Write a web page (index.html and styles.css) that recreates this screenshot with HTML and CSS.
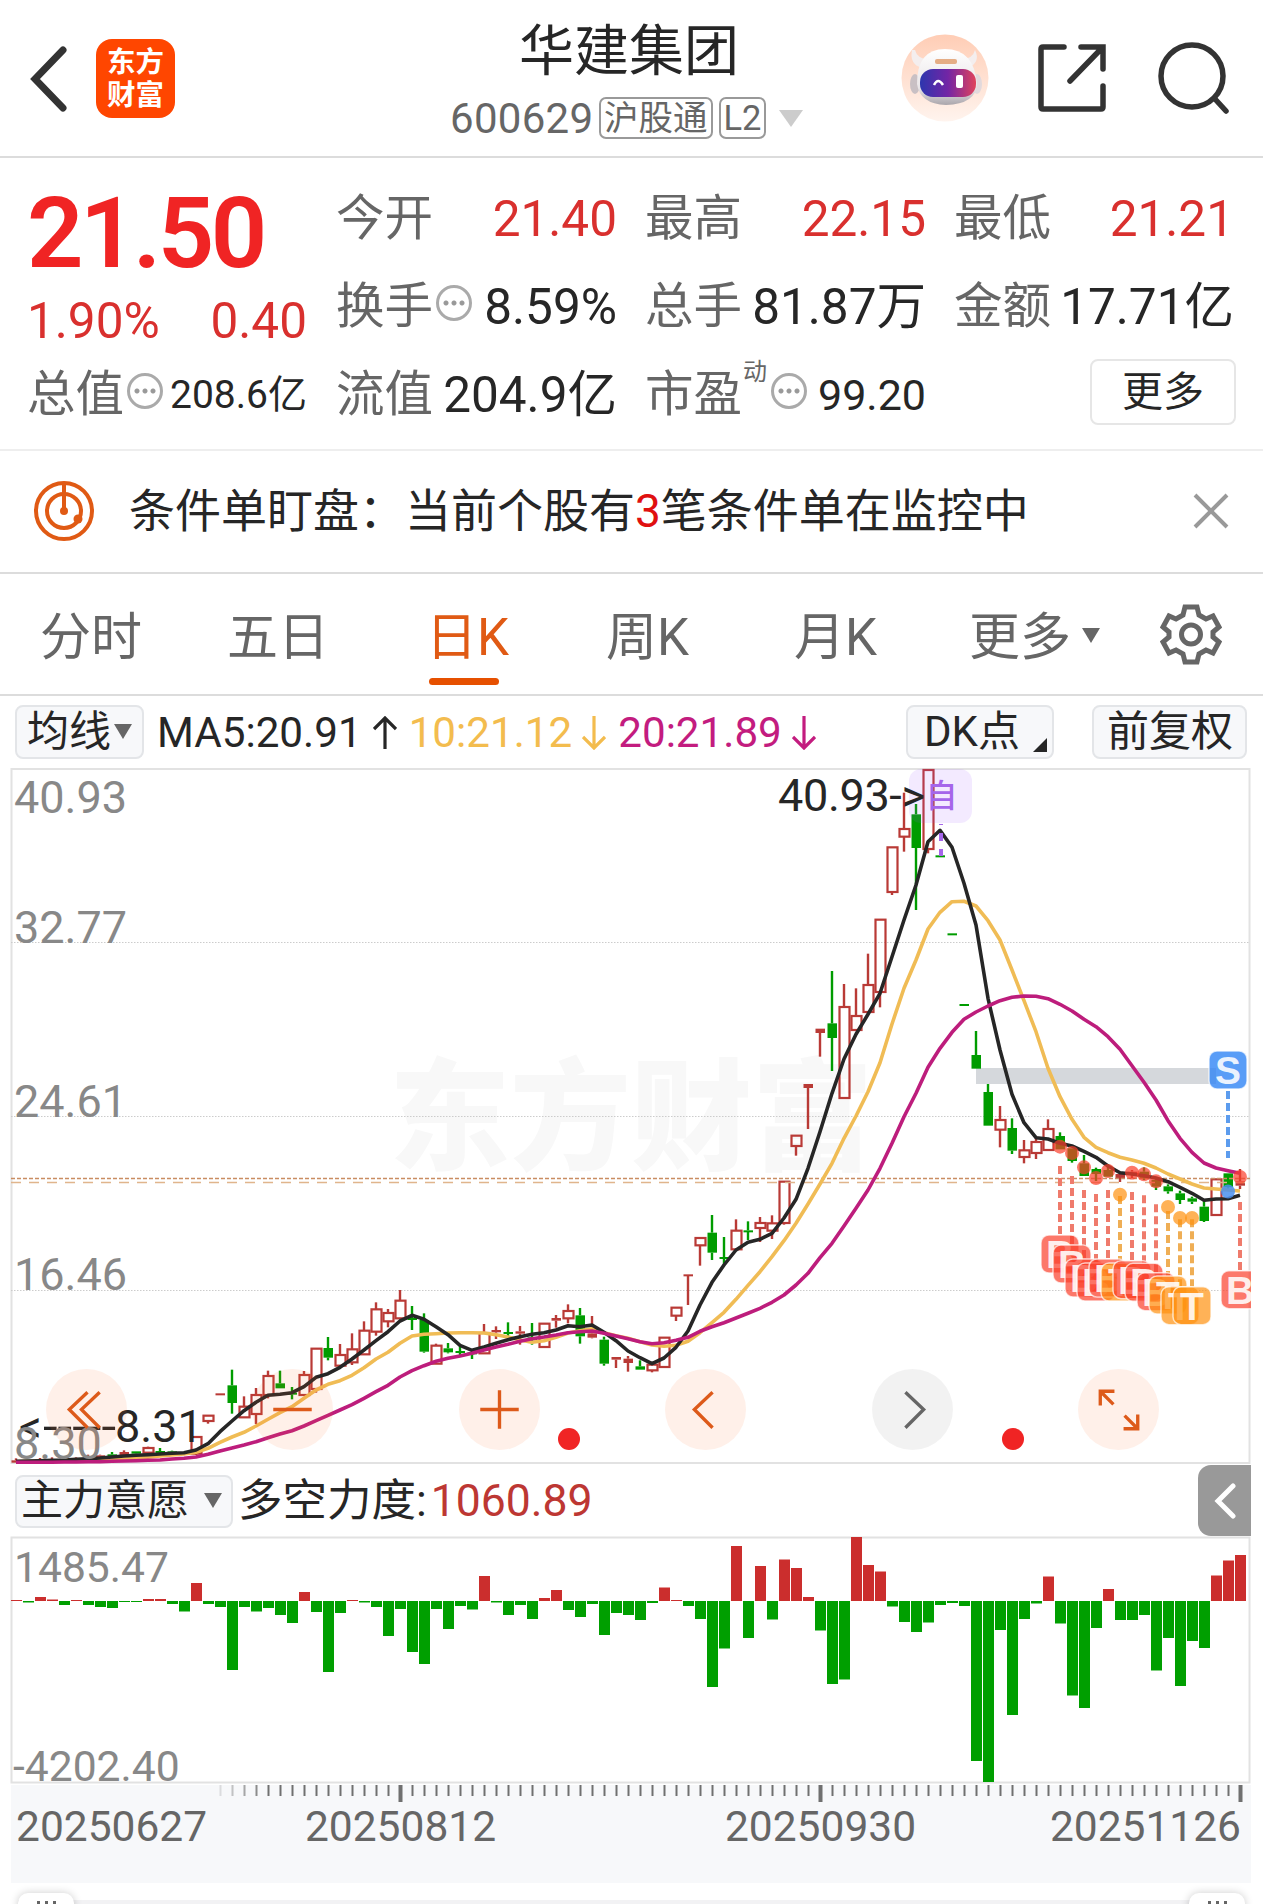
FILE: index.html
```html
<!DOCTYPE html>
<html lang="zh-CN">
<head>
  <meta charset="UTF-8" />
  <meta name="viewport" content="width=device-width, initial-scale=1.0"/>
  <title>华建集团 600629</title>
  <link rel="stylesheet" href="styles.css">
</head>
<body>
  <header class="header">
    <div class="header-left">
      <svg class="back" width="40" height="66" viewBox="0 0 40 66"><path d="M34 4 L6 33 L34 62"/></svg>
      <div class="logo"><span>东方</span><span>财富</span></div>
    </div>
    <div class="header-title">
      <h1>华建集团</h1>
      <div class="code">
        <span class="num">600629</span><span class="tag">沪股通</span><span class="tag">L2</span>
        <svg width="26" height="18" viewBox="0 0 26 18"><path d="M1 1h24L13 18z" fill="#ccc"/></svg>
      </div>
    </div>
    <div class="header-right">
      <svg width="88" height="88" viewBox="0 0 88 88">
        <defs>
          <linearGradient id="halo" x1="0" y1="0" x2="0" y2="1"><stop offset="0" stop-color="#ffcdb5"/><stop offset="1" stop-color="#fff4ee"/></linearGradient>
          <linearGradient id="visor"><stop offset="0" stop-color="#2d36ae"/><stop offset=".5" stop-color="#7325a5"/><stop offset="1" stop-color="#e0435c"/></linearGradient>
          <linearGradient id="shell" x1="0" y1="0" x2="0" y2="1"><stop offset="0" stop-color="#fff"/><stop offset=".7" stop-color="#e9e5e7"/><stop offset="1" stop-color="#aaa6ac"/></linearGradient>
        </defs>
        <circle cx="44" cy="44" r="43.5" fill="url(#halo)"/>
        <ellipse cx="14" cy="50" rx="5" ry="10" fill="#c9c0c4"/>
        <ellipse cx="76" cy="50" rx="5" ry="10" fill="#e2d9dc"/>
        <path d="M11 16q-3 14 10 18l8-8q-13-1-15-10zM74 16q6 12-7 18l-8-8q13-1 15-10z" fill="#f4eeee"/>
        <path d="M16 50Q16 15 44 15Q73 15 76 50Q75 70 45 71Q19 70 16 50z" fill="url(#shell)"/>
        <rect x="34" y="25" width="22" height="5" rx="2" fill="#e5ad85"/>
        <rect x="19" y="35" width="56" height="28" rx="13" fill="url(#visor)"/>
        <path d="M33 51q4-8 9 0" fill="none" stroke="#fff" stroke-width="2.5"/>
        <rect x="55" y="41" width="7" height="13" rx="2" fill="#fff"/>
      </svg>
      <svg class="line-icon" width="70" height="70" viewBox="0 0 70 70"><path d="M27 4H6Q4 4 4 6V64Q4 66 6 66H64Q66 66 66 64V43M44 4H66V26M65 5L33 38"/></svg>
      <svg class="line-icon search" width="74" height="74" viewBox="0 0 74 74"><circle cx="35" cy="35" r="31"/><path d="M58 58L69 70"/></svg>
    </div>
  </header>

  <section class="quote">
    <div class="price-col">
      <div class="price">21.50</div>
      <div class="change"><span>1.90%</span><span>0.40</span></div>
      <div class="cell"><label>总值</label><i class="info"></i><b class="small">208.6亿</b></div>
    </div>
    <div class="cells">
      <div class="cell"><label>今开</label><b class="up">21.40</b></div>
      <div class="cell"><label>最高</label><b class="up">22.15</b></div>
      <div class="cell"><label>最低</label><b class="up">21.21</b></div>
      <div class="cell"><label>换手</label><i class="info"></i><b>8.59%</b></div>
      <div class="cell"><label>总手</label><b>81.87万</b></div>
      <div class="cell"><label>金额</label><b>17.71亿</b></div>
      <div class="cell"><label>流值</label><b>204.9亿</b></div>
      <div class="cell"><label>市盈</label><sup>动</sup><i class="info"></i><b class="mid">99.20</b></div>
      <div class="cell more-cell"><button class="more">更多</button></div>
    </div>
  </section>

  <section class="notice">
    <svg width="62" height="62" viewBox="0 0 62 62" fill="none" stroke="#e05a14" stroke-width="4">
      <circle cx="31" cy="31" r="28"/><circle cx="31" cy="31" r="17"/><path d="M31 3V31"/>
      <circle cx="31" cy="31" r="4" fill="#e05a14" stroke="none"/><circle cx="45" cy="39" r="4.5" fill="#e05a14" stroke="none"/>
    </svg>
    <p>条件单盯盘：当前个股有<em>3</em>笔条件单在监控中</p>
    <svg width="36" height="36" viewBox="0 0 36 36"><path d="M2 2L34 34M34 2L2 34" stroke="#999" stroke-width="4"/></svg>
  </section>

  <nav class="tabs">
    <a class="tab">分时</a>
    <a class="tab">五日</a>
    <a class="tab active">日K</a>
    <a class="tab">周K</a>
    <a class="tab">月K</a>
    <a class="tab">更多<i class="caret"></i></a>
    <svg width="62" height="62" viewBox="0 0 62 62" fill="none" stroke="#666" stroke-width="5">
      <path d="M25 4H37L39 12L46 16L53 13L59 24L53 29V34L59 39L53 50L46 47L39 51L37 59H25L23 51L16 47L9 50L3 39L9 34V29L3 24L9 13L16 16L23 12Z"/>
      <circle cx="31" cy="31.500" r="9.500"/>
    </svg>
  </nav>

  <div class="indicators">
    <button class="chip chip-ma">均线<i class="caret"></i></button>
    <span class="ma ma5">MA5:20.91<svg width="24" height="34" viewBox="0 0 24 34"><path d="M12 33V2M1 13L12 2L23 13"/></svg></span>
    <span class="ma ma10">10:21.12<svg width="24" height="34" viewBox="0 0 24 34"><path d="M12 0V31M1 21L12 32L23 21"/></svg></span>
    <span class="ma ma20">20:21.89<svg width="24" height="34" viewBox="0 0 24 34"><path d="M12 0V31M1 21L12 32L23 21"/></svg></span>
    <button class="chip chip-dk">DK点<i class="corner"></i></button>
    <button class="chip chip-fq">前复权</button>
  </div>

  <div class="kline">
    <svg id="kline" width="1263" height="698" viewBox="0 768 1263 698"></svg>
    <div class="controls">
      <button><svg viewBox="0 0 80 80"><path d="M41 23L23 40L41 58M53 23L35 40L53 58"/></svg></button>
      <button><svg viewBox="0 0 80 80"><path d="M21 40H59"/></svg></button>
      <button><svg viewBox="0 0 80 80"><path d="M21 40H59M40 21V59"/></svg></button>
      <button><svg viewBox="0 0 80 80"><path d="M47 23L29 40L47 58"/></svg></button>
      <button class="off"><svg viewBox="0 0 80 80"><path d="M33 23L51 40L33 58"/></svg></button>
      <button><svg viewBox="0 0 80 80"><path d="M22 36V22H36M22 22L35 35M45 59H59V45M59 59L46 46"/></svg></button>
    </div>
  </div>

  <div class="sub-head">
    <button class="chip chip-sub">主力意愿<i class="caret"></i></button>
    <span class="sub-name">多空力度:<em>1060.89</em></span>
    <button class="expand"><svg width="24" height="36" viewBox="0 0 24 36"><path d="M20 3L5 18L20 33"/></svg></button>
  </div>

  <svg class="force" id="force" width="1263" height="249" viewBox="0 1536 1263 249"></svg>
  <svg class="axis" id="axis" width="1263" height="98" viewBox="0 1785 1263 98"></svg>

  <div class="slider">
    <div class="handle"><i></i><i></i><i></i></div>
    <div class="handle"><i></i><i></i><i></i></div>
  </div>

  <script src="chart.js"></script>
</body>
</html>
```
FILE: styles.css
```css
* {
  box-sizing: border-box;
}
body {
  margin: 0;
  width: 1263px;
  height: 1904px;
  overflow: hidden;
  background: #fff;
  color: #262626;
  font-family: Roboto, "Noto Sans CJK SC", sans-serif;
}
button {
  font-family: inherit;
  color: inherit;
  padding: 0;
}
svg {
  display: block;
  flex: none;
}
em, i, b {
  font-style: normal;
  font-weight: 400;
}

/* header */
.header {
  display: flex;
  justify-content: space-between;
  height: 158px;
  border-bottom: 2px solid #dcdcdc;
}
.header-left {
  width: 420px;
  padding: 39px 0 0 29px;
  display: flex;
  align-items: flex-start;
}
.back {
  margin: 7px 27px 0 0;
  fill: none;
  stroke: #333;
  stroke-width: 7;
  stroke-linecap: round;
}
.logo {
  width: 79px;
  height: 79px;
  padding-top: 7px;
  border-radius: 16px;
  background: #ff4600;
  color: #fff;
  font-size: 28.5px;
  font-weight: 700;
  line-height: 33px;
  text-align: center;
}
.logo span {
  display: block;
}
.header-title {
  width: 380px;
}
.header-title h1 {
  margin: 16px 0 0 99px;
  font-size: 55px;
  font-weight: 400;
  line-height: 70px;
  white-space: nowrap;
}
.code {
  display: flex;
  align-items: center;
  height: 64px;
  padding-left: 30px;
  gap: 6px;
  color: #666;
  font-size: 42px;
  white-space: nowrap;
}
.code svg {
  margin-left: 6px;
}
.code .num {
  width: 143px;
  letter-spacing: .3px;
}
.tag {
  height: 42px;
  padding: 0 3px;
  border: 2px solid #999;
  border-radius: 7px;
  font-size: 34.5px;
  line-height: 38px;
}
.header-right {
  width: 463px;
  display: flex;
  align-items: center;
  padding-left: 101px;
  gap: 48px;
}
.line-icon {
  fill: none;
  stroke: #333;
  stroke-width: 5.5;
  stroke-linecap: round;
}
.search {
  margin-left: 2px;
}

/* quote */
.quote {
  display: flex;
  height: 293px;
  padding: 17px 27px 0 28px;
  border-bottom: 2px solid #eee;
}
.price-col {
  width: 279px;
  padding-top: 9px;
  margin-right: 30px;
}
.price {
  height: 100px;
  margin-left: -1px;
  color: #f02424;
  font-size: 99px;
  font-weight: 600;
  line-height: 99px;
  letter-spacing: -3.5px;
}
.change {
  display: flex;
  justify-content: space-between;
  margin-left: -1px;
  color: #d9302e;
  font-size: 49.5px;
  line-height: 74px;
}
.price-col .cell {
  height: 74px;
}
.cells {
  display: grid;
  grid-template-columns: 280px 280px 279px;
  grid-template-rows: 88px 88px 88px;
  column-gap: 29px;
}
.cell {
  display: flex;
  align-items: center;
  font-size: 48px;
  white-space: nowrap;
}
.cell label {
  margin-left: -1px;
  color: #666;
  font-size: 48.5px;
  line-height: 76px;
}
.cell b {
  margin-left: auto;
  font-size: 49.5px;
  line-height: 76px;
}
.cell b.small {
  font-size: 39px;
}
.cell b.mid {
  font-size: 43px;
}
.cell b.up {
  color: #d9302e;
}
.cell sup {
  align-self: flex-start;
  margin: 7px 2px 0 1px;
  color: #666;
  font-size: 24px;
  line-height: 28px;
}
/* round "..." hint */
.info {
  width: 36px;
  height: 36px;
  margin: -8px 0 0 3px;
  border: 3px solid #aaa;
  border-radius: 50%;
  background: radial-gradient(circle, #999 2px, transparent 3px) center / 8px 8px no-repeat,
    radial-gradient(circle, #999 2px, transparent 3px) 3px center / 8px 8px no-repeat,
    radial-gradient(circle, #999 2px, transparent 3px) 19px center / 8px 8px no-repeat;
}
sup + .info {
  margin-left: 2px;
}
.more {
  width: 146px;
  height: 66px;
  margin: -6px -2px 0 auto;
  border: 2px solid #e6e6e6;
  border-radius: 8px;
  background: #fff;
  font-size: 41px;
  line-height: 60px;
}

/* notice */
.notice {
  display: flex;
  align-items: center;
  height: 123px;
  padding: 0 34px 2px 33px;
  border-bottom: 2px solid #dcdcdc;
}
.notice p {
  margin: 0 auto 0 34px;
  font-size: 46px;
  line-height: 80px;
}
.notice em {
  color: #e01010;
}

/* tabs */
.tabs {
  display: flex;
  align-items: center;
  height: 122px;
  padding: 0 41px 0 40px;
  border-bottom: 2px solid #dcdcdc;
}
.tab {
  height: 120px;
  margin-right: 85px;
  color: #666;
  font-size: 51px;
  line-height: 127px;
}
.tab.active {
  color: #e05a14;
}
.tab.active::after {
  content: "";
  display: block;
  width: 70px;
  height: 7px;
  margin: -23px 0 0 3px;
  border-radius: 4px;
  background: #e65000;
}
.tab:nth-child(2) { margin-right: 97px; }
.tab:nth-child(3) { margin-right: 97px; }
.tab:nth-child(4) { margin-right: 105px; }
.tab:nth-child(5) { margin-right: 92px; }
.tab:nth-child(6) { margin-right: auto; }
.caret {
  display: inline-block;
  width: 0;
  border: 9px solid transparent;
  border-top: 15px solid #666;
  border-bottom: 0;
  vertical-align: 7px;
}
.tab .caret {
  margin-left: 11px;
  vertical-align: 12px;
}

/* moving averages row */
.indicators {
  display: flex;
  align-items: center;
  height: 72px;
  padding: 0 16px 0 15px;
  white-space: nowrap;
}
.chip {
  height: 54px;
  border: 2px solid #e3e5e8;
  border-radius: 8px;
  background: #f7f8fa;
  font-size: 42px;
  line-height: 50px;
  text-align: left;
  white-space: nowrap;
}
.chip-ma {
  width: 129px;
  padding-left: 10px;
  margin-right: 13px;
}
.chip-ma .caret {
  margin-left: 3px;
}
.chip-dk {
  display: flex;
  width: 148px;
  padding-left: 16px;
  margin: 0 38px 0 auto;
}
.chip-fq {
  width: 155px;
  padding-left: 13px;
}
.corner {
  align-self: flex-end;
  margin: 0 5px 5px auto;
  border-left: 14px solid transparent;
  border-bottom: 14px solid #262626;
}
.ma {
  display: flex;
  align-items: center;
  padding-top: 1px;
  font-size: 42.2px;
  line-height: 60px;
}
.ma svg {
  margin: 0 12px 0 10px;
  fill: none;
  stroke: currentColor;
  stroke-width: 3.2;
}
.ma5 svg { margin-left: 11px; }
.ma10 { color: #f3bc4e; }
.ma20 { color: #c31c7f; }

/* charts */
.kline {
  position: relative;
  height: 698px;
}
.controls {
  position: absolute;
  left: 46px;
  bottom: 16px;
  display: flex;
  gap: 125.4px;
}
.controls button {
  width: 81px;
  height: 81px;
  border: 0;
  border-radius: 50%;
  background: rgba(255, 105, 35, .1);
}
.controls svg {
  fill: none;
  stroke: #dd5a1a;
  stroke-width: 3.3;
}
.controls .off {
  background: rgba(0, 0, 0, .05);
}
.controls .off svg {
  stroke: #666;
}
.label {
  fill: #888;
  font-size: 45px;
}
.label-sub {
  fill: #888;
  font-size: 42.6px;
}
.note {
  fill: #262626;
  font-size: 45px;
}
.watermark {
  fill: #f8f8f8;
  font-size: 121px;
  font-weight: 900;
}
.date {
  fill: #666;
  font-size: 42.5px;
}
.badge-text {
  fill: #fff;
  font-family: "Liberation Sans", sans-serif;
  font-size: 39px;
  font-weight: 700;
  text-anchor: middle;
}
.self-text {
  fill: #a566ea;
  font-size: 32px;
  font-weight: 500;
  text-anchor: middle;
}

/* sub chart head */
.sub-head {
  display: flex;
  align-items: center;
  height: 70px;
}
.chip-sub {
  width: 218px;
  height: 53px;
  padding-left: 4px;
  margin: 0 5px 0 15px;
  font-size: 42px;
  line-height: 48px;
}
.chip-sub .caret {
  margin-left: 15px;
}
.sub-name {
  font-size: 44.5px;
  line-height: 60px;
}
.sub-name em {
  margin-left: 4px;
  color: #bd3733;
}
.expand {
  width: 53px;
  height: 71px;
  margin: -1px 12px 0 auto;
  padding-left: 15px;
  border: 0;
  border-radius: 13px 0 0 13px;
  background: #999;
}
.expand svg {
  fill: none;
  stroke: #fff;
  stroke-width: 5;
  stroke-linecap: round;
}

/* range slider */
.slider {
  display: flex;
  justify-content: space-between;
  height: 21px;
  padding: 10px 18px 0;
  background: linear-gradient(#f2f2f4, #f2f2f4) 18px 17px / 1226px 4px no-repeat;
}
.handle {
  display: flex;
  justify-content: center;
  gap: 5px;
  width: 56px;
  height: 40px;
  padding-top: 8px;
  border-radius: 10px;
  background: #fff;
  box-shadow: 0 0 8px rgba(0, 0, 0, .2);
}
.handle i {
  width: 3px;
  height: 12px;
  background: #666;
}
```
FILE: chart.js
```js
var RED = '#b93a36', GREEN = '#009c00';
var STEP = 12, X0 = 16;

function x(i) { return X0 + STEP * i; }
function rect(x, y, w, h, attrs) {
  return '<rect x="' + x + '" y="' + y + '" width="' + w + '" height="' + h + '" ' + (attrs || '') + '/>';
}
function line(x1, y1, x2, y2, attrs) {
  return '<line x1="' + x1 + '" y1="' + y1 + '" x2="' + x2 + '" y2="' + y2 + '" ' + attrs + '/>';
}
function text(x, y, cls, s, attrs) {
  return '<text x="' + x + '" y="' + y + '" class="' + cls + '" ' + (attrs || '') + '>' + s + '</text>';
}

// blocks: [first index, y origin, rows]; rows are in thirds of a pixel
// row: [colour, body top, body bottom, high, low]
var candles = [
  [0, 1240, [
    ['r',661,668,655,668],['r',661,666,660,666],['r',658,664,654,664],['r',657,663,652,663],['r',655,660,650,660],
    ['r',654,658,652,658],['r',648,654,644,656],['r',646,650,644,652],['g',643,648,636,650],['r',636,648,631,650],
    ['g',634,641,634,645],['r',624,638,620,642],['g',633,637,624,640],['g',634,640,632,641],['g',636,642,636,642],
    ['r',591,641,591,645],['r',527,543,527,551],['r',460,464,460,464],['g',436,489,389,521],['r',500,532,469,532],
    ['r',465,522,444,552],['r',408,465,392,475],['g',430,445,392,445],['g',458,464,441,478],['r',405,465,393,465],
    ['r',326,447,326,458],['g',324,353,291,361],['r',345,377,312,377],['r',328,367,280,375],['r',272,343,244,343],
    ['r',208,275,187,287],['r',219,244,207,262],['r',182,235,150,235],['g',234,240,198,270],['g',240,335,220,338],
    ['r',317,371,311,371],['g',325,337,309,340],['g',333,338,320,346],['g',337,342,333,357],['r',279,340,252,340],
    ['r',270,277,259,297],['g',276,281,247,288],['r',274,281,258,314],['g',292,300,249,314],['r',251,321,251,321],
    ['r',234,242,225,263],['r',213,235,193,250],['g',226,289,204,311],['r',280,293,228,295],['g',299,371,290,377],
    ['r',351,359,351,384],['r',356,369,348,395],['g',379,389,361,389],['r',374,391,374,397],['r',293,381,293,381],
    ['r',203,227,203,243],['r',103,108,103,195]
  ]],
  [57, 880, [
    ['r',1074,1096,1074,1157],['g',1058,1118,1005,1140],['g',1131,1136,1071,1157],['r',1052,1108,1018,1108],
    ['g',1051,1056,1024,1080],['r',1029,1044,1011,1086],['r',1030,1052,1006,1077],['r',905,1029,905,1034],
    ['r',767,798,767,827],['r',612,624,612,747],['r',446,459,446,530],['g',430,474,273,573],['r',381,654,312,654],
    ['r',408,450,325,450],['r',315,396,221,396],['r',119,336,119,382]
  ]],
  [73, 760, [
    ['r',262,396,262,405],['r',207,230,98,275],['g',163,264,132,450],['r',30,267,30,280],['g',286,291,286,291],
    ['g',520,526,520,526],['g',732,738,732,738],['g',885,926,813,926],['g',996,1097,972,1097],['r',1080,1109,1038,1162],
    ['g',1104,1172,1075,1182],['r',1171,1191,1140,1210],['r',1146,1179,1128,1197],['r',1107,1170,1078,1170]
  ]],
  [87, 1020, [
    ['g',348,388,337,388],['g',385,423,385,428],['g',430,468,405,468],['g',447,462,443,483],['g',450,470,432,470],
    ['r',462,474,462,486],['r',455,462,450,475],['g',455,475,442,480],['g',480,500,475,510],['g',499,514,493,521],
    ['g',520,540,512,552],['g',535,545,530,552],['g',560,603,543,606],['r',478,585,478,585],['g',460,502,460,510],
    ['r',484,497,447,507]
  ]]
];

var averages = {
  '#f0bc55': [
    [0, 1240, [665,664,664,663,662,662,661,660,659,657,655,652,648,645,642,637,625,607,591,577,558,538,518,500,475,450,433,422,406,383,357,337,310,
      288,283,281,279,278,278,279,284,291,300,307,302,292,279,272,266,278,287,295,305,315,319,316,304,278,248,217,178,136]],
    [62, 880, [1175,1130,1082,1030,972,912,850,775,708,635,548,432,325]],
    [75, 760, [600,507,457,425,424,438,482,540,630,722,815,925,1010]],
    [88, 1020, [298,352,382,398,412,420,430,444,462,477,492,504,507,510,513]]
  ],
  '#262626': [
    [0, 1240, [664,663,662,661,660,658,656,654,651,648,646,644,642,640,638,630,611,575,543,512,487,466,463,458,440,412,401,382,357,330,302,275,243,
      226,238,260,284,316,331,321,310,299,290,283,278,270,257,260,255,277,302,333,353,371,354,322,273]],
    [57, 880, [1275,1207,1155,1110,1087,1078,1060,1014,958,865,755,640,537,463,403]],
    [72, 760, [700,590,480,375,245,211,262,370,495,715,870,1003,1088,1133,1137]],
    [87, 1020, [370,378,394,412,438,458,462,467,474,485,502,520,541,537,536,526]]
  ],
  '#bd1d7c': [
    [0, 1240, [667,667,667,667,666,666,665,665,664,663,662,661,660,657,655,651,643,633,624,615,605,593,582,572,558,542,526,510,494,475,455,436,411,
      392,377,364,355,348,340,330,321,313,304,296,291,285,278,275,273,280,288,296,305,311,308,301,292,274,260,248,234,220,205,187,165]],
    [65, 880, [1215,1180,1133,1090,1038,985,930,865,790,710]],
    [75, 760, [1000,922,865,817,778,756,738,722,712,708,709,716,733,753]],
    [89, 1020, [-2,20,50,88,137,187,240,302,355,397,429,444,452,460]]
  ]
};

// index, type, dot y, dash start, badge top (thirds of a pixel from 1020)
var trades = [
  [87,'B',380,438,645],[88,'B',399,468,675],[89,'B',442,510,717],[90,'B',474,522,729],[91,'B',453,510,717],
  [92,'T',524,528,729],[93,'B',458,516,722],[94,'B',463,526,730],[95,'B',484,553,758],[96,'T',561,573,768],
  [97,'T',594,598,800],[98,'T',594,598,800],[102,'B',471,546,752]
];
var tradeColors = { B: '#fb3f2b', T: '#ff9210', S: '#2f84f5' };

function drawBadge(cx, top, type, alpha) {
  return rect(cx - 19, top, 38, 38, 'rx="8" fill="' + tradeColors[type] + '" fill-opacity="' + alpha + '" stroke="#fff" stroke-opacity=".7" stroke-width="1.500"') +
    text(cx, top + 33, 'badge-text', type, 'fill-opacity=".88"');
}

function drawKline() {
  var s = text(389, 1160, 'watermark', '东方财富');
  s += rect(11.5, 769, 1238, 694, 'fill="none" stroke="#e2e2e2" stroke-width="2"');
  [942.5, 1116.5, 1290.5].forEach(function (y) {
    s += line(11, y, 1250, y, 'stroke="#ccc" stroke-dasharray="1.500 1.500"');
  });
  s += rect(976, 1068, 240, 16, 'fill="#d5d8dc"');

  candles.forEach(function (block) {
    block[2].forEach(function (c, n) {
      var cx = x(block[0] + n), up = c[0] === 'r', color = up ? RED : GREEN;
      var y = c.slice(1).map(function (v) { return block[1] + v / 3; });
      var h = y[1] - y[0];
      if (y[2] < y[0]) s += line(cx, y[2], cx, y[0], 'stroke="' + color + '" stroke-width="2.400"');
      if (y[3] > y[1]) s += line(cx, y[1], cx, y[3], 'stroke="' + color + '" stroke-width="2.400"');
      if (up && h > 4.5) s += rect(cx - 4.5, y[0], 10, h, 'fill="none" stroke="' + color + '" stroke-width="2.200"');
      else s += rect(cx - 4.5, y[0], 9.5, Math.max(h, 2), 'fill="' + color + '"');
    });
  });

  s += line(11, 1178.5, 1250, 1178.5, 'stroke="#c98d62" stroke-width="1.500" stroke-dasharray="4 2"');
  s += line(11, 1182.5, 1250, 1182.5, 'stroke="#e0b58c" stroke-width="1.500" stroke-dasharray="10 8"');

  Object.keys(averages).forEach(function (color) {
    var pts = [];
    averages[color].forEach(function (block) {
      block[2].forEach(function (v, n) {
        pts.push(x(block[0] + n) + ',' + (block[1] + v / 3).toFixed(1));
      });
    });
    s += '<polyline points="' + pts.join(' ') + '" fill="none" stroke="' + color + '" stroke-width="3.600" stroke-linejoin="round"/>';
  });

  s += '<clipPath id="frame"><rect x="11" y="768" width="1240" height="696"/></clipPath><g clip-path="url(#frame)">';
  trades.forEach(function (t) {
    var cx = x(t[0]), top = 1020 + t[4] / 3;
    s += line(cx, 1020 + t[3] / 3, cx, top, 'stroke="' + (t[1] === 'B' ? '#ef7b6c' : '#efae55') + '" stroke-width="4" stroke-dasharray="8 4"');
    s += '<circle cx="' + cx + '" cy="' + (1020 + t[2] / 3) + '" r="7" fill="' + tradeColors[t[1]] + '" fill-opacity=".7"/>';
  });
  trades.forEach(function (t) {
    s += drawBadge(x(t[0]), 1020 + t[4] / 3, t[1], .7);
  });
  s += '</g>';
  s += line(1228, 1091, 1228, 1158, 'stroke="#5c9cee" stroke-width="4" stroke-dasharray="8 4"');
  s += '<circle cx="1228" cy="1191.500" r="7" fill="#4a90ee" fill-opacity=".85"/>';
  s += drawBadge(1228, 1051, 'S', .8);

  s += rect(909, 769, 63, 54, 'rx="12" fill="#a050ff" fill-opacity=".12"');
  s += text(941.5, 807, 'self-text', '自');
  s += line(941, 824, 941, 856, 'stroke="#a566ea" stroke-width="4" stroke-dasharray="1 8 8 8 8 0"');
  s += text(778, 811, 'note', '40.93-&gt;', 'textLength="147"');
  s += text(19, 1442, 'note', '&lt;');
  s += text(43, 1442, 'note', '-----', 'textLength="73" lengthAdjust="spacingAndGlyphs"');
  s += text(115, 1442, 'note', '8.31');

  s += text(14, 813, 'label', '40.93') + text(14, 943, 'label', '32.77') + text(14, 1117, 'label', '24.61') +
    text(14, 1290, 'label', '16.46') + text(14, 1459, 'label', '8.30');
  s += '<circle cx="569" cy="1439" r="11" fill="#f02424"/><circle cx="1013" cy="1439" r="11" fill="#f02424"/>';
  document.getElementById('kline').innerHTML = s;
}

var force = [1,-1.5,4,1.5,-4,1,-4,-6,-7,-1,-1,2,2,-3,-10.5,18,-3,-6,-69,-6,-10.5,-7,-14,-22,9,-11,-71,-12,1,-1.5,
  -6,-35,-8,-51,-63,-8,-28,-5,-8.5,25,-1.5,-14,-4,-18,3,11,-9,-16,-3,-34,-12,-14,-19,-2,13.5,1,-5,-18,-86,-47.5,
  55,-37,35,-18.5,41.5,33,4,-29.5,-83,-78.5,64,36,29.5,-5.5,-21,-31,-21.5,-4,-2,-5,-160,-181,-29,-114,-18,-2.5,
  24.5,-22.5,-94.5,-107,-27,12,-19,-19,-14,-69.5,-37,-85,-40,-47,25.5,40.5,46];

function drawForce() {
  var base = 1601;
  var s = rect(11.5, 1537.5, 1238, 245, 'fill="none" stroke="#e2e2e2" stroke-width="2"');
  force.forEach(function (v, i) {
    s += rect(x(i) - 5, v > 0 ? base - v : base, 11, Math.abs(v), 'fill="' + (v > 0 ? '#cb2e2d' : '#009f00') + '"');
  });
  s += text(14, 1582, 'label-sub', '1485.47') + text(13, 1781, 'label-sub', '-4202.40');
  document.getElementById('force').innerHTML = s;
}

function drawAxis() {
  var s = rect(11, 1785, 1240, 98, 'fill="#f7f8fa"');
  for (var i = 17; i < 103; i++) {
    var major = i === 32 || i === 67 || i === 102;
    s += rect(x(i) - (major ? 1.5 : .5), 1785, major ? 4 : 2, major ? 17 : 11, 'fill="#707070" opacity="' + Math.min(1, (i - 16) / 5) + '"');
  }
  s += text(16, 1841, 'date', '20250627') + text(400.5, 1841, 'date', '20250812', 'text-anchor="middle"') +
    text(820.5, 1841, 'date', '20250930', 'text-anchor="middle"') + text(1241, 1841, 'date', '20251126', 'text-anchor="end"');
  document.getElementById('axis').innerHTML = s;
}

drawKline();
drawForce();
drawAxis();
```
